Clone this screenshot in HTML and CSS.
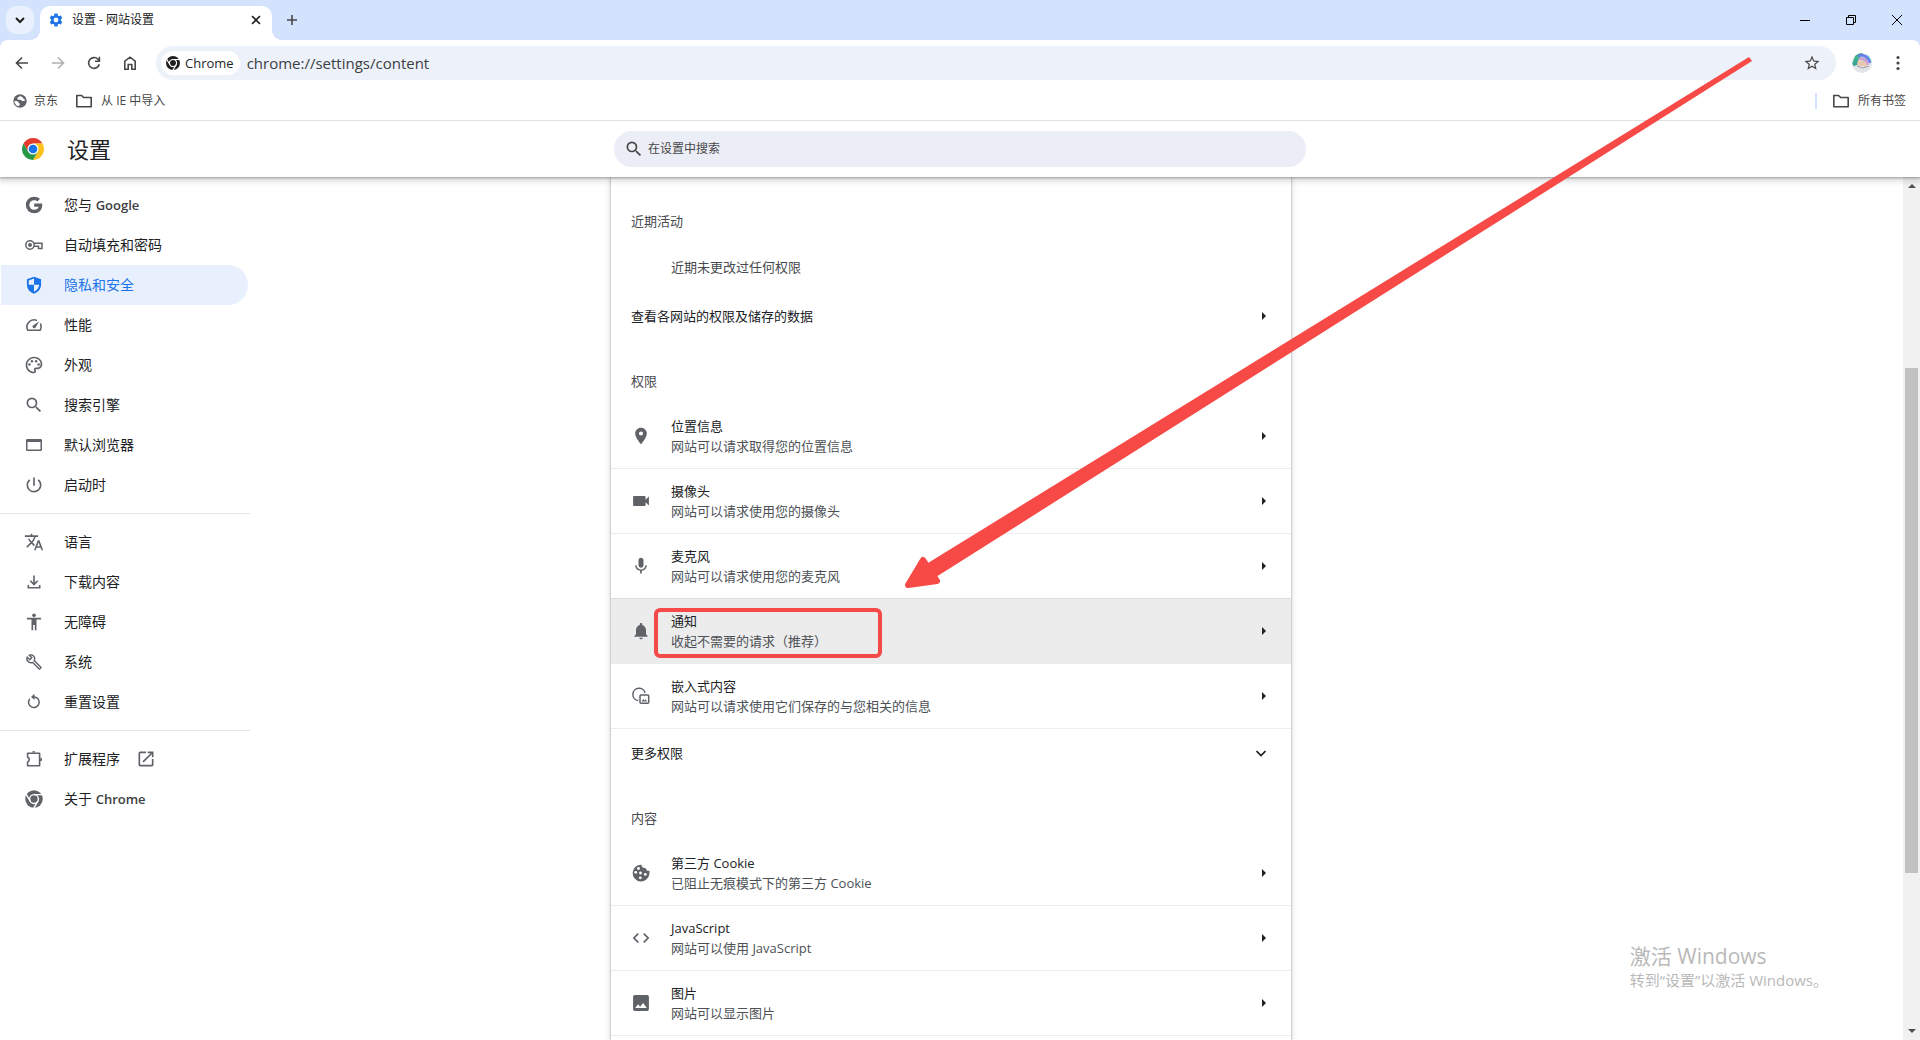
FILE: index.html
```html
<!DOCTYPE html>
<html lang="zh-CN">
<head>
<meta charset="utf-8">
<title>设置 - 网站设置</title>
<link rel="stylesheet" href="styles.css">
</head>
<body>
<svg class="defs" aria-hidden="true">
  <symbol id="gear" viewBox="0 0 24 24"><path d="M19.14 12.94c.04-.3.06-.61.06-.94s-.02-.64-.07-.94l2.03-1.58c.18-.14.23-.41.12-.61l-1.92-3.32c-.12-.22-.37-.29-.59-.22l-2.39.96c-.5-.38-1.03-.7-1.62-.94l-.36-2.54a.48.48 0 0 0-.48-.41h-3.84c-.24 0-.43.17-.47.41l-.36 2.54c-.59.24-1.13.57-1.62.94l-2.39-.96c-.22-.08-.47 0-.59.22L2.74 8.87c-.12.21-.08.47.12.61l2.03 1.58c-.05.3-.09.63-.09.94s.02.64.07.94l-2.03 1.58c-.18.14-.23.41-.12.61l1.92 3.32c.12.22.37.29.59.22l2.39-.96c.5.38 1.03.7 1.62.94l.36 2.54c.05.24.24.41.48.41h3.84c.24 0 .44-.17.47-.41l.36-2.54c.59-.24 1.13-.56 1.62-.94l2.39.96c.22.08.47 0 .59-.22l1.92-3.32c.12-.22.07-.47-.12-.61l-2.01-1.58zM12 15.6A3.6 3.6 0 1 1 12 8.400a3.6 3.6 0 0 1 0 7.200z"/></symbol>
  <symbol id="search" viewBox="0 0 24 24"><path d="M15.500 14h-.79l-.28-.27A6.471 6.471 0 0 0 16 9.500 6.500 6.500 0 1 0 9.500 16c1.610 0 3.090-.59 4.230-1.570l.27.28v.79l5 4.990L20.490 19l-4.990-5zm-6 0C7.010 14 5 11.990 5 9.500S7.010 5 9.500 5 14 7.010 14 9.500 11.990 14 9.500 14z"/></symbol>
  <symbol id="folder" viewBox="0 0 20 20"><path fill="none" stroke="currentColor" stroke-width="1.600" stroke-linejoin="round" d="M2.800 4.500h4.800l2 2h7.600v9.200H2.800z"/></symbol>
  <symbol id="globe" viewBox="0 0 24 24"><circle cx="12" cy="12" r="11.500"/><path fill="#fff" d="M12 3.500c-1 1.500-4 1.800-4.500 4-.3 1.500 1 2.500 2.500 2.500h3c1.500 0 1.500 2 3 2h3.500c.6 0 1-1.500.6-3-.6-.6-1.600 0-2.100-1l-1.500-2.500zM2.500 11.500c2 .5 4.500 0 6 1.500 1 1 .5 2.500 2 3 1.500.4 1.500 1 1.300 2.200L9.500 21a9.700 9.700 0 0 1-7-9.500z"/></symbol>
  <symbol id="chrome-mono" viewBox="0 0 24 24"><circle cx="12" cy="12" r="10.500"/><g fill="none" stroke="#fff" stroke-width="1.700"><circle cx="12" cy="12" r="5.300"/><path d="M12 6.700h10.500M16.600 14.650l-5.250 9.100M7.400 14.650l-5.250-9.100"/></g></symbol>
  <symbol id="google" viewBox="0 0 24 24"><path d="M12.200 10.100v4.100h5.300c-.5 2.200-2.400 3.600-5.300 3.600a5.800 5.800 0 1 1 0-11.600c1.600 0 2.900.6 3.900 1.500l3.100-3.100C17.300 2.900 15 2 12.200 2a10 10 0 1 0 0 20c5.800 0 9.700-4.100 9.700-9.900 0-.7-.1-1.400-.2-2z"/></symbol>
  <symbol id="key" viewBox="0 0 20 20"><circle cx="6" cy="10" r="4.200" fill="none" stroke="currentColor" stroke-width="1.500"/><circle cx="6" cy="10" r="2"/><path fill="none" stroke="currentColor" stroke-width="1.500" d="M10 8.200h8v5.200h-3.500v-2.200H10"/></symbol>
  <symbol id="shield" viewBox="0 0 24 24"><path d="M12 2 3.500 5.200v6.300C3.500 16.500 7 21 12 22.500c5-1.500 8.500-6 8.500-11V5.200zm0 9.800h6.300c-.5 3.700-3 7-6.300 8.300v-8.300H5.700V6.700L12 4.300z"/></symbol>
  <symbol id="speed" viewBox="0 0 20 20"><path fill="none" stroke="currentColor" stroke-width="1.600" stroke-linejoin="round" stroke-linecap="round" d="M12.400 5.200A7.200 7.200 0 0 0 3.700 15.200h12.600a7.200 7.200 0 0 0 .3-6.200"/><path d="M15.300 6.200 11.400 12.700a1.700 1.700 0 0 1-2.500-2.300z"/></symbol>
  <symbol id="palette" viewBox="0 0 24 24"><path d="M12 22C6.490 22 2 17.510 2 12S6.490 2 12 2s10 4.040 10 9c0 3.310-2.690 6-6 6h-1.770c-.28 0-.5.22-.5.5 0 .12.05.23.13.33.41.47.64 1.060.64 1.670A2.500 2.500 0 0 1 12 22zm0-18c-4.410 0-8 3.590-8 8s3.590 8 8 8c.28 0 .5-.22.5-.5a.54.54 0 0 0-.14-.35c-.41-.46-.63-1.050-.63-1.650a2.500 2.500 0 0 1 2.500-2.500H16c2.210 0 4-1.790 4-4 0-3.860-3.590-7-8-7z"/><circle cx="6.500" cy="11.500" r="1.500"/><circle cx="9.500" cy="7.500" r="1.500"/><circle cx="14.500" cy="7.500" r="1.500"/><circle cx="17.500" cy="11.500" r="1.500"/></symbol>
  <symbol id="browser" viewBox="0 0 20 20"><path fill-rule="evenodd" d="M3.300 4h13.400c.7 0 1.300.6 1.300 1.300v9.400c0 .7-.6 1.300-1.300 1.300H3.300c-.7 0-1.300-.6-1.300-1.300V5.300C2 4.600 2.600 4 3.300 4zm.2 3v7.600h13V7z"/></symbol>
  <symbol id="power" viewBox="0 0 24 24"><path d="M13 3h-2v10h2V3zm4.830 2.170-1.420 1.420A6.920 6.920 0 0 1 19 12c0 3.870-3.130 7-7 7A6.995 6.995 0 0 1 7.580 6.580L6.170 5.170A8.932 8.932 0 0 0 3 12a9 9 0 0 0 18 0c0-2.740-1.230-5.180-3.170-6.830z"/></symbol>
  <symbol id="translate" viewBox="0 0 24 24"><path d="M12.870 15.070l-2.540-2.510.03-.03A17.520 17.520 0 0 0 14.070 6H17V4h-7V2H8v2H1v1.990h11.170C11.500 7.920 10.440 9.750 9 11.350 8.070 10.320 7.300 9.190 6.690 8h-2c.73 1.630 1.730 3.170 2.980 4.560l-5.090 5.020L4 19l5-5 3.110 3.110.76-2.040zM18.500 10h-2L12 22h2l1.120-3h4.750L21 22h2l-4.500-12zm-2.620 7 1.620-4.330L19.120 17h-3.240z"/></symbol>
  <symbol id="download" viewBox="0 0 20 20"><path fill="none" stroke="currentColor" stroke-width="1.600" d="M10 3.500v8.500M6.300 8.800 10 12.500l3.700-3.700M4.300 13v2.800h11.400V13"/></symbol>
  <symbol id="person" viewBox="0 0 24 24"><circle cx="12" cy="4" r="2.200"/><path d="M3.500 7h17v2H15v13h-2v-6.500h-2V22H9V9H3.500z"/></symbol>
  <symbol id="wrench" viewBox="-2 -2 28 28"><path d="M22.610 18.990l-9.080-9.080c.93-2.340.45-5.100-1.440-7C9.790.61 6.210.4 3.660 2.260L7.500 6.110 6.080 7.520 2.250 3.690C.39 6.230.6 9.820 2.900 12.110c1.860 1.860 4.570 2.350 6.890 1.480l9.110 9.110c.39.39 1.020.39 1.410 0l2.300-2.300c.4-.38.4-1.010 0-1.410zm-3 1.600l-9.460-9.460c-.61.45-1.290.72-2 .82-1.360.2-2.790-.21-3.830-1.250C3.370 9.760 2.930 8.500 3 7.260l3.090 3.090 4.240-4.240-3.090-3.090c1.240-.07 2.490.37 3.440 1.310 1.080 1.080 1.490 2.570 1.240 3.960-.12.71-.42 1.370-.88 1.960l9.450 9.450-.88.89z"/></symbol>
  <symbol id="reset" viewBox="0 0 20 20"><path fill="none" stroke="currentColor" stroke-width="1.500" d="M5.800 6.800a5.300 5.300 0 1 0 4-1.900h-1M14.200 7a5.300 5.300 0 0 0-4.400-2.100"/><path d="M10.500 1.800v6.200L7 4.900z"/></symbol>
  <symbol id="puzzle" viewBox="0 0 20 20"><path fill="none" stroke="currentColor" stroke-width="1.600" stroke-linejoin="round" d="M3.600 4.200h12v12.600h-12v-3.900a2.400 2.400 0 0 0 0-4.600z"/><path d="M8 3.600a1.700 1.700 0 0 1 3.400 0zM16.200 8.500a1.900 1.900 0 0 1 0 3.800z"/></symbol>
  <symbol id="external" viewBox="0 0 24 24"><path d="M19 19H5V5h7V3H5a2 2 0 0 0-2 2v14a2 2 0 0 0 2 2h14c1.100 0 2-.9 2-2v-7h-2v7zM14 3v2h3.590l-9.830 9.830 1.410 1.410L19 6.410V10h2V3h-7z"/></symbol>
  <symbol id="place" viewBox="0 0 24 24"><path d="M12 2C8.130 2 5 5.130 5 9c0 5.250 7 13 7 13s7-7.750 7-13c0-3.870-3.130-7-7-7zm0 9.500a2.500 2.500 0 0 1 0-5 2.500 2.500 0 0 1 0 5z"/></symbol>
  <symbol id="camera" viewBox="0 0 24 24"><path d="M17.500 10.500V7c0-.55-.45-1-1-1H3.500c-.55 0-1 .45-1 1v10c0 .55.45 1 1 1h13c.55 0 1-.45 1-1v-3.500l4 4v-11l-4 4z"/></symbol>
  <symbol id="mic" viewBox="0 0 24 24"><path d="M12 14c1.660 0 2.990-1.340 2.990-3L15 5c0-1.660-1.340-3-3-3S9 3.340 9 5v6c0 1.660 1.340 3 3 3zm5.300-3c0 3-2.540 5.100-5.300 5.100S6.700 14 6.700 11H5c0 3.410 2.720 6.230 6 6.720V21h2v-3.280c3.280-.48 6-3.300 6-6.720h-1.700z"/></symbol>
  <symbol id="bell" viewBox="0 0 24 24"><path d="M12 22c1.100 0 2-.9 2-2h-4a2 2 0 0 0 2 2zm6-6v-5c0-3.070-1.640-5.640-4.500-6.320V4c0-.83-.67-1.500-1.500-1.500s-1.500.67-1.500 1.500v.68C7.630 5.360 6 7.920 6 11v5l-2 2v1h16v-1l-2-2z"/></symbol>
  <symbol id="embed" viewBox="0 0 20 20"><g fill="none" stroke="currentColor" stroke-width="1.500"><path d="M7.200 14.600A6.200 6.200 0 1 1 14.100 7"/><rect x="9" y="9" width="8.700" height="8.200" rx="1"/></g><path d="M10.500 15.500 12.200 13l1.300 1.500 1-1.200 1.700 2.200z"/></symbol>
  <symbol id="cookie" viewBox="0 0 20 20"><path d="M10.500 1.700a8.400 8.400 0 1 0 7.900 9.300c.2-1.800.2-2.500.1-3.300-2 .6-3.500-.5-3.500-2.500-2.500.3-4.500-1.200-4.500-3.500z"/><g fill="#fff"><circle cx="7.500" cy="5.500" r="1.400"/><circle cx="4.700" cy="9.300" r="1.400"/><circle cx="9.500" cy="10" r="1.400"/><circle cx="14.300" cy="11.300" r="1.400"/><circle cx="9.300" cy="14.800" r="1.400"/></g></symbol>
  <symbol id="code" viewBox="0 0 24 24"><path d="M9.400 16.600 4.800 12l4.600-4.600L8 6l-6 6 6 6 1.400-1.400zm5.200 0 4.600-4.600-4.600-4.600L16 6l6 6-6 6-1.400-1.400z"/></symbol>
  <symbol id="image" viewBox="0 0 24 24"><path d="M21.500 19.500v-15a2 2 0 0 0-2-2h-15a2 2 0 0 0-2 2v15c0 1.100.9 2 2 2h15a2 2 0 0 0 2-2zM8.500 13.500l2.500 3.010L14.500 12l4.500 6H5l3.500-4.500z"/></symbol>
</svg>

<header class="tabstrip">
  <button class="tab-search" aria-label="搜索标签页"><svg width="12" height="12" viewBox="0 0 12 12"><path fill="none" stroke="#1f1f1f" stroke-width="2" d="m2 4 4 4 4-4"/></svg></button>
  <div class="tab">
    <svg class="tab-icon"><use href="#gear"/></svg>
    <span class="tab-title">设置 - 网站设置</span>
    <button class="tab-close" aria-label="关闭"><svg width="10" height="10" viewBox="0 0 10 10"><path stroke="#1f1f1f" stroke-width="1.600" d="m1 1 8 8M9 1 1 9"/></svg></button>
  </div>
  <button class="new-tab" aria-label="新标签页"><svg width="12" height="12" viewBox="0 0 12 12"><path stroke="#474747" stroke-width="1.600" d="M6 1v10M1 6h10"/></svg></button>
  <div class="window-controls">
    <button aria-label="最小化"><svg width="12" height="12" viewBox="0 0 12 12"><path stroke="#000" d="M1 6.500h10"/></svg></button>
    <button aria-label="还原"><svg width="12" height="12" viewBox="0 0 12 12"><path fill="none" stroke="#000" d="M1.500 3.500h7v7h-7zM3.500 3.500v-2h7v7h-2"/></svg></button>
    <button aria-label="关闭窗口"><svg width="12" height="12" viewBox="0 0 12 12"><path stroke="#000" d="m1 1 10 10M11 1 1 11"/></svg></button>
  </div>
</header>

<div class="toolbar-area">
  <div class="toolbar">
    <button class="tool" aria-label="返回"><svg width="16" height="16" viewBox="0 0 16 16"><path fill="none" stroke="currentColor" stroke-width="1.600" d="M14 8H3M8 2.500 2.500 8 8 13.500"/></svg></button>
    <button class="tool tool-disabled" aria-label="前进" disabled><svg width="16" height="16" viewBox="0 0 16 16"><path fill="none" stroke="currentColor" stroke-width="1.600" d="M2 8h11M8 2.500 13.500 8 8 13.500"/></svg></button>
    <button class="tool" aria-label="重新加载"><svg width="16" height="16" viewBox="0 0 16 16"><path fill="none" stroke="currentColor" stroke-width="1.600" d="M13.300 9.200A5.400 5.400 0 1 1 12 4.300l1.500 1.500M13.400 1.800v4.400H9"/></svg></button>
    <button class="tool" aria-label="主页"><svg width="16" height="16" viewBox="0 0 16 16"><path fill="none" stroke="currentColor" stroke-width="1.600" d="M2.800 14.200V6.200L8 2.200l5.200 4v8h-3.400V9.500H6.200v4.700z"/></svg></button>
    <div class="omnibox">
      <button class="chip"><svg class="chip-icon"><use href="#chrome-mono"/></svg>Chrome</button>
      <input class="url" type="text" aria-label="地址" value="chrome://settings/content">
      <button class="tool star" aria-label="收藏"><svg width="18" height="18" viewBox="0 0 24 24"><path fill="currentColor" d="m22 9.240-7.190-.62L12 2 9.190 8.630 2 9.240l5.460 4.730L5.820 21 12 17.270 18.180 21l-1.630-7.030L22 9.240zM12 15.400l-3.760 2.270 1-4.280-3.320-2.880 4.380-.38L12 6.100l1.710 4.040 4.380.38-3.320 2.880 1 4.280L12 15.400z"/></svg></button>
    </div>
    <button class="tool" aria-label="个人资料"><svg width="20" height="20" viewBox="0 0 20 20"><clipPath id="round"><circle cx="10" cy="10" r="10"/></clipPath><g clip-path="url(#round)"><path fill="#e3e4e8" d="M0 0h20v20H0z"/><path fill="#43b48e" d="M4 0h7L3 13 0 11z"/><path fill="#7fd6dc" d="M8 3 17 2l3 7-9 0z"/><path fill="none" stroke="#6a7bea" stroke-width="2.500" d="M6 3q9-3 12 7"/><path fill="none" stroke="#d99ad4" stroke-width="2.500" d="M7 6q7-2 9 6"/><path fill="#e9c7ad" d="M4 8q6-2 10 2l1 4-5-1-6-1z"/><path fill="#36a795" d="M2 8l4-2-1 6-4 1z"/><path fill="none" stroke="#9aa0ab" d="m5 13 6 2 6-2"/></g></svg></button>
    <button class="tool" aria-label="菜单"><svg width="16" height="16" viewBox="0 0 16 16" fill="currentColor"><circle cx="8" cy="2.500" r="1.600"/><circle cx="8" cy="8" r="1.600"/><circle cx="8" cy="13.500" r="1.600"/></svg></button>
  </div>
  <nav class="bookmarks" aria-label="书签">
    <a class="bookmark" href="#"><svg class="bookmark-globe"><use href="#globe"/></svg>京东</a>
    <a class="bookmark" href="#"><svg class="bookmark-folder"><use href="#folder"/></svg>从 IE 中导入</a>
    <a class="bookmark bookmark-all" href="#"><svg class="bookmark-folder"><use href="#folder"/></svg>所有书签</a>
  </nav>
</div>

<header class="settings-header">
  <div class="brand">
    <svg width="22" height="22" viewBox="2 2 44 44"><path fill="#e33b2e" d="M4.950 13a22 22 0 0 1 38.100 0H24l-9.530 16.500z"/><path fill="#fcc21b" d="M24 46a22 22 0 0 0 19.050-33H24l9.530 16.500z"/><path fill="#279847" d="M4.950 13A22 22 0 0 0 24 46l9.530-16.500H14.470z"/><circle cx="24" cy="24" r="11" fill="#fff"/><circle cx="24" cy="24" r="8.700" fill="#1a73e8"/></svg>
    <h1>设置</h1>
  </div>
  <label class="search"><svg class="search-icon"><use href="#search"/></svg><input type="search" placeholder="在设置中搜索" aria-label="在设置中搜索"></label>
</header>

<div class="body">
  <div class="page">
    <nav class="sidebar" aria-label="设置菜单">
      <a class="item" href="#"><svg class="icon"><use href="#google"/></svg><span>您与 <b>Google</b></span></a>
      <a class="item" href="#"><svg class="icon"><use href="#key"/></svg>自动填充和密码</a>
      <a class="item item-selected" href="#"><svg class="icon"><use href="#shield"/></svg>隐私和安全</a>
      <a class="item" href="#"><svg class="icon"><use href="#speed"/></svg>性能</a>
      <a class="item" href="#"><svg class="icon"><use href="#palette"/></svg>外观</a>
      <a class="item" href="#"><svg class="icon"><use href="#search"/></svg>搜索引擎</a>
      <a class="item" href="#"><svg class="icon"><use href="#browser"/></svg>默认浏览器</a>
      <a class="item" href="#"><svg class="icon"><use href="#power"/></svg>启动时</a>
      <hr>
      <a class="item" href="#"><svg class="icon"><use href="#translate"/></svg>语言</a>
      <a class="item" href="#"><svg class="icon"><use href="#download"/></svg>下载内容</a>
      <a class="item" href="#"><svg class="icon"><use href="#person"/></svg>无障碍</a>
      <a class="item" href="#"><svg class="icon"><use href="#wrench"/></svg>系统</a>
      <a class="item" href="#"><svg class="icon"><use href="#reset"/></svg>重置设置</a>
      <hr>
      <a class="item" href="#"><svg class="icon"><use href="#puzzle"/></svg>扩展程序<svg class="icon icon-external"><use href="#external"/></svg></a>
      <a class="item" href="#"><svg class="icon"><use href="#chrome-mono"/></svg><span>关于 <b>Chrome</b></span></a>
    </nav>

    <main class="card">
      <h2>近期活动</h2>
      <p class="empty">近期未更改过任何权限</p>
      <a class="row row-short" href="#"><span class="title">查看各网站的权限及储存的数据</span><i class="arrow"></i></a>
      <h2>权限</h2>
      <a class="row" href="#"><svg class="icon"><use href="#place"/></svg><span class="text"><span class="title">位置信息</span><span class="sub">网站可以请求取得您的位置信息</span></span><i class="arrow"></i></a>
      <a class="row" href="#"><svg class="icon"><use href="#camera"/></svg><span class="text"><span class="title">摄像头</span><span class="sub">网站可以请求使用您的摄像头</span></span><i class="arrow"></i></a>
      <a class="row" href="#"><svg class="icon"><use href="#mic"/></svg><span class="text"><span class="title">麦克风</span><span class="sub">网站可以请求使用您的麦克风</span></span><i class="arrow"></i></a>
      <a class="row row-active" href="#"><svg class="icon"><use href="#bell"/></svg><span class="text"><span class="title">通知</span><span class="sub">收起不需要的请求（推荐）</span></span><i class="arrow"></i></a>
      <a class="row" href="#"><svg class="icon"><use href="#embed"/></svg><span class="text"><span class="title">嵌入式内容</span><span class="sub">网站可以请求使用它们保存的与您相关的信息</span></span><i class="arrow"></i></a>
      <button class="row row-short"><span class="title">更多权限</span><svg class="chevron" viewBox="1 1 10 10"><path fill="none" stroke="#202124" stroke-width="1.700" d="m1.500 4 4.500 4.500L10.500 4"/></svg></button>
      <h2>内容</h2>
      <a class="row" href="#"><svg class="icon"><use href="#cookie"/></svg><span class="text"><span class="title">第三方 Cookie</span><span class="sub">已阻止无痕模式下的第三方 Cookie</span></span><i class="arrow"></i></a>
      <a class="row" href="#"><svg class="icon"><use href="#code"/></svg><span class="text"><span class="title">JavaScript</span><span class="sub">网站可以使用 JavaScript</span></span><i class="arrow"></i></a>
      <a class="row" href="#"><svg class="icon"><use href="#image"/></svg><span class="text"><span class="title">图片</span><span class="sub">网站可以显示图片</span></span><i class="arrow"></i></a>
    </main>
  </div>
  <div class="scrollbar" aria-hidden="true">
    <i class="scroll-arrow scroll-up"></i>
    <div class="track"><div class="thumb"></div></div>
    <i class="scroll-arrow scroll-down"></i>
  </div>
</div>

<div class="watermark"><strong>激活 Windows</strong><span>转到“设置”以激活 Windows。</span></div>
<svg class="pointer" viewBox="900 50 860 545" aria-hidden="true"><path fill="#f74a46" stroke="#f74a46" stroke-width="6" stroke-linejoin="round" d="M908 585 923 560 937 581z"/><path fill="#f74a46" d="m928 563 821-506 3 4L936 577z"/></svg>
</body>
</html>
```
FILE: styles.css
```css
*, *::before, *::after { box-sizing: border-box; }

body {
  position: relative;
  display: flex;
  flex-direction: column;
  min-height: 100vh;
  margin: 0;
  background: #fff;
  color: #202124;
  font: 13px/20px "Open Sans", "Noto Sans CJK SC", sans-serif;
}

button, input { font: inherit; color: inherit; border: 0; padding: 0; background: none; outline: 0; }
a { color: inherit; text-decoration: none; }
svg { display: block; flex: none; fill: currentColor; }
h1, h2, p { margin: 0; font-weight: 400; }
.defs { position: absolute; width: 0; height: 0; }

/* Tab strip */
.tabstrip { position: relative; z-index: 1; display: flex; height: 40px; padding-left: 6px; background: #d3e3fd; }
.tab-search {
  display: grid;
  place-items: center;
  width: 28px;
  height: 28px;
  margin: 6px 6px 0 0;
  border-radius: 10px;
  background: #e9f1fe;
}
.tab {
  position: relative;
  display: flex;
  align-items: center;
  width: 232px;
  margin-top: 6px;
  padding: 0 10px 6px 8px;
  border-radius: 10px 10px 0 0;
  background: #fff;
  font-size: 12px;
}
.tab::before, .tab::after {
  content: "";
  position: absolute;
  bottom: 0;
  width: 10px;
  height: 10px;
}
.tab::before { left: -10px; background: radial-gradient(circle at 0 0, transparent 10px, #fff 10px); }
.tab::after { right: -10px; background: radial-gradient(circle at 100% 0, transparent 10px, #fff 10px); }
.tab-icon { width: 16px; height: 16px; margin-right: 8px; color: #1a73e8; }
.tab-title { flex: 1; }
.tab-close { display: grid; place-items: center; width: 12px; height: 20px; }
.new-tab { display: grid; place-items: center; width: 28px; height: 28px; margin: 6px 0 0 6px; }
.window-controls { display: flex; margin-left: auto; }
.window-controls button { display: grid; place-items: center; width: 46px; }

/* Toolbar and bookmarks */
.toolbar-area {
  background: #fff;
  border-bottom: 1px solid #dfe1e3;
  box-shadow: 0 -10px 0 0 #d3e3fd;
  border-radius: 8px 8px 0 0;
}
.toolbar { display: flex; align-items: center; gap: 8px; padding: 6px 8px 0; }
.tool { display: grid; place-items: center; flex: none; width: 28px; height: 28px; color: #474747; }
.tool-disabled { color: #b0b0b0; }
.omnibox {
  display: flex;
  align-items: center;
  flex: 1;
  height: 34px;
  margin: 0 4px;
  padding: 0 10px 0 5px;
  border-radius: 17px;
  background: #ecf1fa;
}
.chip {
  display: flex;
  align-items: center;
  gap: 4px;
  height: 24px;
  padding: 0 6px 0 4px;
  border-radius: 12px;
  background: #fff;
  color: #1f1f1f;
}
.chip-icon { width: 16px; height: 16px; }
.url { flex: 1; min-width: 0; margin-left: 7px; color: #3c4043; font-size: 15px; }
.bookmarks { display: flex; align-items: center; gap: 16px; height: 40px; padding: 1px 14px 0 13px; font-size: 12px; color: #474747; }
.bookmark { display: flex; align-items: center; gap: 7px; }
.bookmark-globe { width: 14px; height: 14px; color: #5f6368; }
.bookmark-folder { width: 20px; height: 20px; }
.bookmark-all { height: 16px; margin-left: auto; padding-left: 14px; border-left: 2px solid #d3e3fd; }

/* Settings header */
.settings-header {
  position: relative;
  z-index: 1;
  display: grid;
  grid-template-columns: 1fr minmax(0, 692px) 1fr;
  align-items: center;
  height: 56px;
  background: #fff;
  box-shadow: 0 1px 2px rgba(60, 64, 67, .4), 0 2px 6px 2px rgba(60, 64, 67, .2);
  clip-path: inset(0 0 -12px);
}
.brand { display: flex; align-items: center; gap: 23px; padding-left: 22px; }
h1 { font-size: 22px; line-height: 32px; }
.search {
  display: flex;
  align-items: center;
  gap: 4px;
  height: 36px;
  padding: 0 10px;
  border-radius: 18px;
  background: #ebeef7;
  color: #474747;
  font-size: 12px;
}
.search-icon { width: 20px; height: 20px; }
.search input { flex: 1; min-width: 0; }
.search input::placeholder { color: #474747; }

/* Page body */
.body { display: flex; flex: 1; }
.page { display: grid; grid-template-columns: 1fr minmax(0, 680px) 1fr; flex: 1; padding-right: 1px; }
.icon { width: 20px; height: 20px; color: #5f6368; }

.sidebar { width: 250px; padding-top: 8px; font-size: 14px; }
.item { display: flex; align-items: center; gap: 20px; height: 40px; margin: 0 2px 0 1px; padding-left: 23px; }
.item b { font-weight: 600; color: #3c4043; font-size: 13px; }
.item-selected { border-radius: 0 20px 20px 0; background: #e8f0fe; color: #1a73e8; }
.item-selected .icon { color: #1a73e8; }
.icon-external { margin-left: -4px; }
.sidebar hr { height: 1px; margin: 8px 0; border: 0; background: #e4e5e7; }

.card {
  padding-top: 3px;
  background: #fff;
  box-shadow: 0 0 2px rgba(60, 64, 67, .5), 0 1px 6px 1px rgba(60, 64, 67, .15);
}
h2 { height: 64px; padding: 31px 20px 0; font-size: 13px; line-height: 20px; color: #474a4e; }
.empty { height: 48px; padding: 13px 60px 0; color: #474a4e; }
.row {
  position: relative;
  display: flex;
  align-items: center;
  gap: 20px;
  width: 100%;
  height: 65px;
  padding: 0 25px 0 20px;
  border-bottom: 1px solid #ebecee;
  text-align: left;
}
.row-short { height: 48px; border: 0; }
.row .title { flex: 1; }
.row .text { display: flex; flex: 1; flex-direction: column; }
.row .text span { height: 20px; flex: none; }
.sub { color: #4d5156; }
.row-active { background: #ececec; box-shadow: 0 -1px 0 #dcdcdc; }
.row-active::after {
  content: "";
  position: absolute;
  left: 43px;
  top: 9px;
  width: 228px;
  height: 50px;
  border: 4px solid #f74a46;
  border-radius: 6px;
}
.arrow { border: solid transparent; border-width: 4px 0 4px 4px; border-left-color: #202124; }
.chevron { width: 10px; height: 10px; }

/* Scrollbar */
.scrollbar { display: flex; flex-direction: column; width: 17px; background: #f1f1f1; }
.scroll-arrow { align-self: center; margin: 7px 0; border: 4px solid transparent; }
.scroll-up { border-top: 0; border-bottom-color: #505050; }
.scroll-down { border-bottom: 0; border-top-color: #505050; }
.track { flex: 1; display: flex; flex-direction: column; }
.track::before { content: ""; flex: 173; }
.track::after { content: ""; flex: 149; }
.thumb { flex: 505; margin: 0 2px; background: #c1c1c1; }

/* Overlays */
.watermark { position: absolute; right: 92px; bottom: 48px; display: flex; flex-direction: column; color: #b9b9b9; font-size: 15px; line-height: 24px; }
.watermark strong { font-size: 21px; font-weight: 400; }
.pointer { position: absolute; left: 900px; top: 50px; width: 860px; height: 545px; pointer-events: none; z-index: 2; }
```
